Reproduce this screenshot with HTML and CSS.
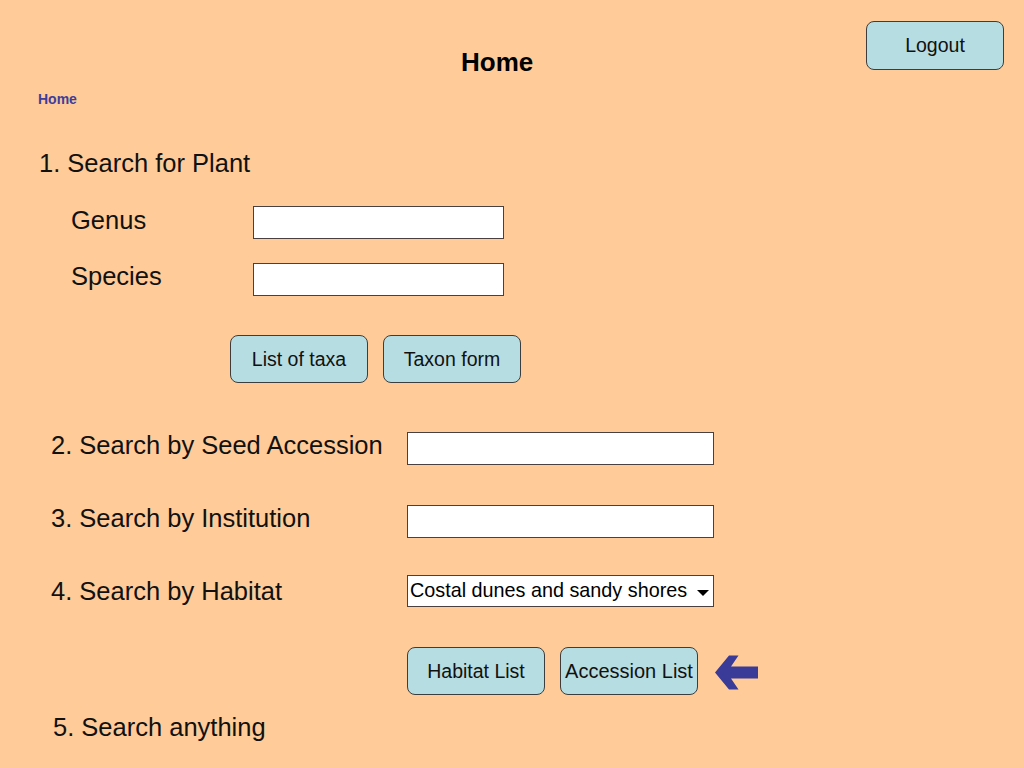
FILE: index.html
```html
<!DOCTYPE html>
<html lang="en">
<head>
<meta charset="utf-8">
<title>Home</title>
<link rel="stylesheet" href="styles.css">
</head>
<body>
<header class="top">
  <h1 class="title">Home</h1>
  <button class="btn logout" type="button">Logout</button>
</header>
<nav class="crumbs"><a href="#" class="crumb">Home</a></nav>
<main class="main">
  <h2 class="sec sec-1">1. Search for Plant</h2>
  <div class="plant-fields">
    <label class="field-label">Genus</label>
    <input class="text-input" type="text">
    <label class="field-label field-label-2">Species</label>
    <input class="text-input" type="text">
  </div>
  <div class="btn-row btn-row-1">
    <button class="btn" type="button">List of taxa</button>
    <button class="btn" type="button">Taxon form</button>
  </div>
  <div class="search-grid">
    <div class="sec">2. Search by Seed Accession</div>
    <input class="text-input wide" type="text">
    <div class="sec">3. Search by Institution</div>
    <input class="text-input wide" type="text">
    <div class="sec">4. Search by Habitat</div>
    <div class="select wide">
      <span class="select-text">Costal dunes and sandy shores</span>
      <span class="caret"></span>
    </div>
  </div>
  <div class="btn-row btn-row-2">
    <button class="btn" type="button">Habitat List</button>
    <button class="btn btn-big" type="button">Accession List</button>
    <svg class="arrow" width="43" height="38" viewBox="0 0 43 38" aria-hidden="true">
      <polygon points="0,18.5 14,1.5 23.5,1.5 16,12.5 43,12.5 43,24.5 16,24.5 23.5,35.5 14,35.5" fill="#3a3a98"/>
    </svg>
  </div>
  <div class="sec sec-5">5. Search anything</div>
</main>
</body>
</html>
```
FILE: styles.css
```css
* { box-sizing: border-box; }
html, body {
  margin: 0;
  padding: 0;
  background: #ffcb98;
  height: 100%;
}
body {
  font-family: "Liberation Sans", Arial, sans-serif;
  color: #111;
  overflow: hidden;
}
.top {
  display: flex;
  align-items: flex-start;
  padding-right: 20px;
  height: 77px;
}
.title {
  margin: 47px 0 0 461px;
  font-size: 26px;
  line-height: 30px;
  font-weight: bold;
  color: #000;
}
.btn {
  font-family: "Liberation Sans", Arial, sans-serif;
  font-size: 19.5px;
  color: #111;
  background: #b6dde2;
  border: 1.6px solid #3d3d3d;
  border-radius: 8px;
  width: 138px;
  height: 48px;
  padding: 0;
  display: flex;
  align-items: center;
  justify-content: center;
}
.logout {
  margin: 21px 0 0 auto;
  height: 49px;
}
.crumbs {
  margin-top: 14px;
  padding-left: 38px;
  font-size: 14px;
  line-height: 16px;
  height: 16px;
}
.crumb {
  font-size: 14px;
  font-weight: bold;
  color: #3d3d9c;
  text-decoration: none;
}
.main {
  display: flex;
  flex-direction: column;
  align-items: flex-start;
}
.sec {
  font-size: 25.5px;
  line-height: 30px;
  height: 30px;
  font-weight: normal;
  margin: 0;
  white-space: nowrap;
}
.sec-1 {
  margin: 41px 0 0 39px;
}
.plant-fields {
  margin: 28px 0 0 71px;
  display: grid;
  grid-template-columns: 182px 251px;
  row-gap: 24px;
  align-items: start;
}
.field-label {
  font-size: 25.5px;
  line-height: 30px;
  margin-top: -1px;
}
.field-label-2 {
  margin-top: -2px;
}
.text-input {
  width: 251px;
  height: 33px;
  background: #fff;
  border: 1.6px solid #4a4040;
  margin: 0;
  padding: 0;
}
.text-input.wide, .select.wide {
  width: 307px;
}
.btn-row {
  display: flex;
  align-items: center;
  gap: 15px;
}
.btn-row-1 {
  margin: 39px 0 0 230px;
}
.search-grid {
  margin: 49px 0 0 51px;
  display: grid;
  grid-template-columns: 356px 307px;
  row-gap: 40px;
  align-items: start;
}
.search-grid .sec {
  margin-top: -2px;
}
.search-grid .select {
  margin-top: -3px;
}
.select {
  height: 32px;
  background: #fff;
  border: 1.6px solid #4a4040;
  display: flex;
  align-items: center;
  justify-content: space-between;
  padding: 0 4px 0 2px;
}
.select-text {
  font-size: 19.8px;
  line-height: 24px;
  color: #000;
  margin-top: -2px;
}
.caret {
  width: 0;
  height: 0;
  border-left: 6px solid transparent;
  border-right: 6px solid transparent;
  border-top: 6px solid #000;
  margin-top: 3px;
}
.btn-row-2 {
  margin: 40px 0 0 407px;
}
.btn-big {
  font-size: 20px;
}
.arrow {
  margin-left: 2px;
  margin-top: 4px;
}
.sec-5 {
  margin: 17px 0 0 53px;
}
```
